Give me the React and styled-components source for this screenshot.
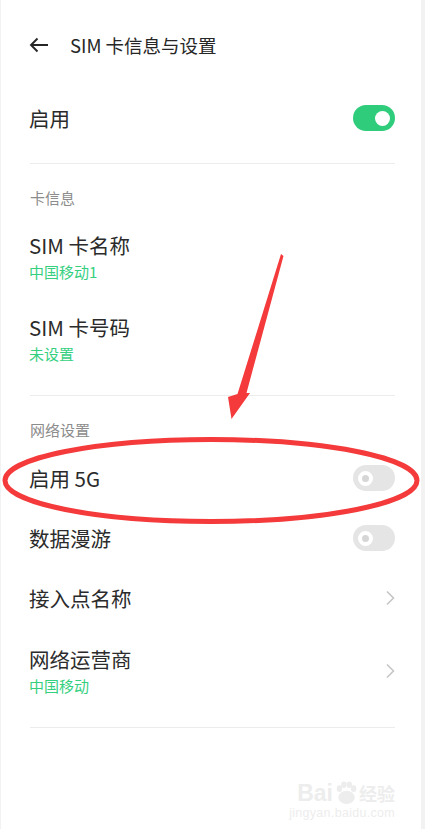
import styled, { createGlobalStyle } from "styled-components"

const GlobalStyle = createGlobalStyle`
  * { box-sizing: border-box; }
  body {
    margin: 0;
    background: #f2f2f2;
    font-family: "Noto Sans CJK SC", "Noto Sans", Roboto, sans-serif;
  }
`

const Page = styled.div`
  position: relative;
  width: 420px;
  min-height: 829px;
  margin-left: 1px;
  background: #fff;
  padding: 0 26px 0 28px;
  overflow: hidden;
`

const Header = styled.div`
  height: 90px;
  display: flex;
  align-items: center;
  gap: 21px;
  color: #262626;
`

const Title = styled.div`
  font-size: 18.5px;
  line-height: 24px;
  color: #262626;
`

const Row = styled.div`
  height: ${(p) => p.$h || 60}px;
  display: flex;
  align-items: center;
  justify-content: space-between;
`

const Item = styled.div`
  padding: ${(p) => p.$top || 14}px 0 17px;
  display: flex;
  align-items: center;
  justify-content: space-between;
`

const Texts = styled.div`
  display: flex;
  flex-direction: column;
  gap: 3px;
`

const Label = styled.div`
  font-size: 20.5px;
  line-height: 28px;
  color: #2b2b2b;
`

const Sub = styled.div`
  font-size: 15px;
  line-height: 20px;
  color: #35d07f;
`

const SectionLabel = styled.div`
  padding: 24px 0 ${(p) => p.$bottom || 9}px 1px;
  font-size: 15px;
  line-height: 20px;
  color: #8c8c8c;
`

const Divider = styled.div`
  height: 1px;
  background: #ececec;
  margin-top: ${(p) => p.$top}px;
  margin-left: 1px;
`

const Track = styled.div`
  width: 42px;
  height: 26px;
  border-radius: 13px;
  background: ${(p) => (p.$on ? "#2ecc7b" : "#e5e5e5")};
  display: flex;
  align-items: center;
  justify-content: ${(p) => (p.$on ? "flex-end" : "flex-start")};
  padding: 0 5px;
`

const Knob = styled.div`
  width: 15px;
  height: 15px;
  border-radius: 50%;
  background: ${(p) => (p.$on ? "#fff" : "#d6d6d6")};
  border: ${(p) => (p.$on ? "none" : "4px solid #fff")};
`

const Overlay = styled.svg`
  position: absolute;
  left: -1px;
  top: 0;
  pointer-events: none;
`

const Watermark = styled.div`
  position: absolute;
  right: 26px;
  bottom: 9px;
  display: flex;
  flex-direction: column;
  align-items: flex-end;
  color: #ededed;
  font-family: "Liberation Sans", Arial, sans-serif;
`

const Brand = styled.div`
  display: flex;
  align-items: center;
  gap: 1px;
  font-size: 23px;
  font-weight: bold;
  line-height: 26px;
  span:last-child {
    font-family: "Noto Sans CJK SC", sans-serif;
    font-size: 18px;
  }
`

const Url = styled.div`
  font-size: 12.5px;
  line-height: 14px;
  letter-spacing: 0.3px;
`

const Toggle = ({ on }) => (
  <Track $on={on}>
    <Knob $on={on} />
  </Track>
)

const Chevron = () => (
  <svg width="10" height="16" viewBox="0 0 10 16">
    <path d="M2 1.5 L8.5 8 L2 14.5" fill="none" stroke="#c6c6c6" strokeWidth="1.6" />
  </svg>
)

const BackArrow = () => (
  <svg width="20" height="16" viewBox="0 0 20 16">
    <path d="M19 8 H2 M8.5 1.5 L2 8 L8.5 14.5" fill="none" stroke="#262626" strokeWidth="1.9" />
  </svg>
)

const Paw = () => (
  <svg width="24" height="24" viewBox="0 0 22 22">
    <g fill="#ededed">
      <ellipse cx="5" cy="7" rx="2.5" ry="3" />
      <ellipse cx="9" cy="3.5" rx="2.5" ry="3" />
      <ellipse cx="14" cy="3.5" rx="2.5" ry="3" />
      <ellipse cx="18" cy="7" rx="2.5" ry="3" />
      <ellipse cx="11.5" cy="15" rx="7.5" ry="6" />
    </g>
  </svg>
)

const App = () => {
  return (
    <>
      <GlobalStyle />
      <Page>
        <Header>
          <BackArrow />
          <Title>SIM 卡信息与设置</Title>
        </Header>

        <Row $h={56}>
          <Label>启用</Label>
          <Toggle on />
        </Row>
        <Divider $top={17} />

        <SectionLabel>卡信息</SectionLabel>
        <Item>
          <Texts>
            <Label>SIM 卡名称</Label>
            <Sub>中国移动1</Sub>
          </Texts>
        </Item>
        <Item>
          <Texts>
            <Label>SIM 卡号码</Label>
            <Sub>未设置</Sub>
          </Texts>
        </Item>
        <Divider $top={14} />

        <SectionLabel $bottom={8}>网络设置</SectionLabel>
        <Row>
          <Label>启用 5G</Label>
          <Toggle />
        </Row>
        <Row>
          <Label>数据漫游</Label>
          <Toggle />
        </Row>
        <Row>
          <Label>接入点名称</Label>
          <Chevron />
        </Row>
        <Item $top={17}>
          <Texts>
            <Label>网络运营商</Label>
            <Sub>中国移动</Sub>
          </Texts>
          <Chevron />
        </Item>
        <Divider $top={14} />

        <Overlay width="425" height="829" viewBox="0 0 425 829">
          <ellipse cx="211" cy="480.5" rx="206" ry="41" fill="none" stroke="#f43a3a" strokeWidth="5" />
          <polygon
            points="281,254 283.5,256 246.5,393 250,393 231.5,419 228,397 237.5,394"
            fill="#f43a3a"
          />
        </Overlay>

        <Watermark>
          <Brand>
            <span>Bai</span>
            <Paw />
            <span>经验</span>
          </Brand>
          <Url>jingyan.baidu.com</Url>
        </Watermark>
      </Page>
    </>
  )
}

export default App
